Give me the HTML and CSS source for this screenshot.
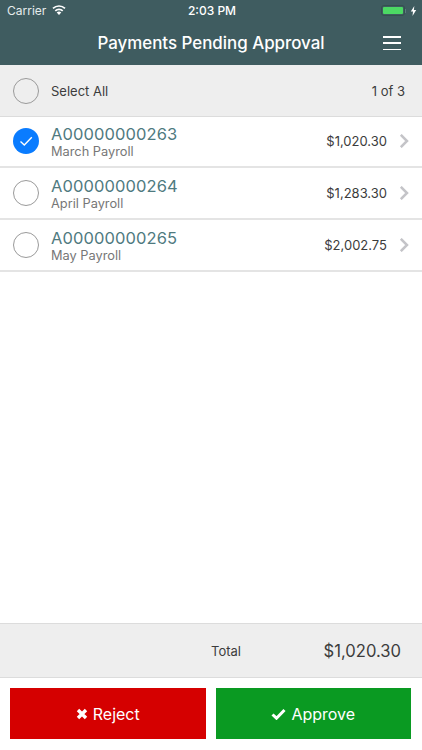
FILE: index.html
```html
<!DOCTYPE html>
<html lang="en">
<head>
<meta charset="utf-8">
<title>Payments Pending Approval</title>
<link rel="stylesheet" href="styles.css">
</head>
<body>
<div class="app">
  <header class="top">
    <div class="status">
      <div class="status-left">
        <span>Carrier</span>
        <svg class="wifi" viewBox="0 0 14 10" width="14" height="10"><path d="M7 10 4.700 7.500a3.300 3.300 0 0 1 4.600 0Z" fill="#fff"/><path d="M3.300 5.900a5.300 5.300 0 0 1 7.400 0" fill="none" stroke="#fff" stroke-width="1.700"/><path d="M1 3.400a8.700 8.700 0 0 1 12 0" fill="none" stroke="#fff" stroke-width="1.700"/></svg>
      </div>
      <div class="status-time">2:03 PM</div>
      <div class="status-right">
        <span class="battery"><span class="battery-fill"></span></span>
        <span class="battery-nub"></span>
        <svg class="bolt" viewBox="0 0 6 10" width="7" height="10"><path d="M3.800 0 0.300 5.600h2.200L2 10l3.700-6H3.400Z" fill="#fff"/></svg>
      </div>
    </div>
    <div class="nav">
      <h1 class="nav-title">Payments Pending Approval</h1>
      <button class="menu" aria-label="Menu"><span></span><span></span><span></span></button>
    </div>
  </header>

  <div class="select-row">
    <span class="radio"></span>
    <span class="select-label">Select All</span>
    <span class="count">1 of 3</span>
  </div>

  <ul class="list">
    <li class="row">
      <span class="radio checked"><svg viewBox="0 0 26 26" width="26" height="26"><path d="M7.500 13.500 11.300 17 18.800 9.200" fill="none" stroke="#fff" stroke-width="1.400"/></svg></span>
      <div class="row-text"><div class="row-id">A00000000263</div><div class="row-name">March Payroll</div></div>
      <span class="amount">$1,020.30</span>
      <svg class="chev" viewBox="0 0 10 14" width="10" height="14"><path d="M1.800 0.800 8 7 1.800 13.200" fill="none" stroke="#c4c4c8" stroke-width="2.500"/></svg>
    </li>
    <li class="row">
      <span class="radio"></span>
      <div class="row-text"><div class="row-id">A00000000264</div><div class="row-name">April Payroll</div></div>
      <span class="amount">$1,283.30</span>
      <svg class="chev" viewBox="0 0 10 14" width="10" height="14"><path d="M1.800 0.800 8 7 1.800 13.200" fill="none" stroke="#c4c4c8" stroke-width="2.500"/></svg>
    </li>
    <li class="row">
      <span class="radio"></span>
      <div class="row-text"><div class="row-id">A00000000265</div><div class="row-name">May Payroll</div></div>
      <span class="amount">$2,002.75</span>
      <svg class="chev" viewBox="0 0 10 14" width="10" height="14"><path d="M1.800 0.800 8 7 1.800 13.200" fill="none" stroke="#c4c4c8" stroke-width="2.500"/></svg>
    </li>
  </ul>

  <div class="total">
    <span class="total-label">Total</span>
    <span class="total-value">$1,020.30</span>
  </div>

  <div class="actions">
    <button class="btn reject"><svg viewBox="0 0 12 12" width="12" height="12"><path d="M2 2 10 10M10 2 2 10" fill="none" stroke="#fff" stroke-width="3.400"/></svg>Reject</button>
    <button class="btn approve"><svg viewBox="0 0 15 12" width="15" height="12"><path d="M1.500 6.500 5.500 10.200 13.500 2" fill="none" stroke="#fff" stroke-width="3"/></svg>Approve</button>
  </div>
</div>
</body>
</html>
```
FILE: styles.css
```css
* { box-sizing: border-box; }
html, body { margin: 0; padding: 0; background: #fff; }
body { font-family: Inter, "Liberation Sans", sans-serif; color: #3a3a3a; }
.app { width: 422px; height: 750px; display: flex; flex-direction: column; overflow: hidden; }

.top { height: 65px; background: #3f5c60; color: #fff; flex: none; }
.status { height: 21px; display: grid; grid-template-columns: 1fr auto 1fr; align-items: center; padding: 0 5px 0 7px; font-size: 12px; }
.status-left { display: flex; align-items: center; gap: 6px; color: #e6ecec; font-size: 12px; }
.wifi { margin-top: -2px; }
.status-time { font-weight: 500; font-size: 12px; }
.status-right { display: flex; justify-content: flex-end; align-items: center; }
.battery { width: 24px; height: 11px; border: 1px solid #35504f; border-radius: 3px; padding: 1px; display: block; }
.battery-fill { display: block; height: 100%; background: #4cd964; border-radius: 1px; }
.battery-nub { width: 1.500px; height: 4px; background: #5c7b7d; margin-right: 4px; }
.nav { height: 44px; position: relative; display: flex; align-items: center; justify-content: center; }
.nav-title { margin: 0; font-size: 16.900px; font-weight: 500; letter-spacing: 0; color: #fff; }
.menu { position: absolute; right: 21px; top: 15px; width: 18px; height: 14px; padding: 0; border: 0; background: none; display: flex; flex-direction: column; justify-content: space-between; }
.menu span { display: block; height: 1.500px; width: 18px; background: #fff; }

.select-row { height: 51px; flex: none; position: relative; background: #eeeeee; box-shadow: 0 1px 0 #dcdcdc; display: flex; align-items: center; padding: 1px 17px 0 13px; }
.select-label { margin-left: 12px; font-size: 13px; color: #3c3c3c; flex: 1; }
.count { font-size: 13px; color: #3c3c3c; }
.radio { width: 26px; height: 26px; border-radius: 50%; border: 1px solid #9a9a9a; flex: none; display: block; }
.radio.checked { background: #0a7cff; border: 0; }
.radio.checked svg { display: block; }

.list { list-style: none; margin: 0; padding: 0; flex: 1; }
.row { height: 52px; border-bottom: 2px solid #e4e4e4; display: flex; align-items: center; padding: 0 13px; }
.row-text { margin-left: 12px; flex: 1; padding-top: 3px; }
.row-id { font-size: 16.500px; line-height: 19px; color: #4f7a7f; letter-spacing: 0.1px; }
.row-name { font-size: 12.800px; line-height: 16px; color: #777; }
.amount { font-size: 13px; color: #3c3c3c; }
.chev { margin-left: 12px; flex: none; }

.total { height: 55px; flex: none; background: #eeeeee; border-top: 1px solid #dcdcdc; border-bottom: 1px solid #dcdcdc; display: flex; align-items: center; padding: 0 21px 0 211px; }
.total-label { font-size: 13px; flex: 1; color: #3c3c3c; }
.total-value { font-size: 16.600px; color: #3c3c3c; }

.actions { height: 72px; flex: none; display: flex; gap: 10px; padding: 10px 11px 11px 10px; }
.btn { flex: 1; height: 51px; border: 0; color: #fff; font-family: inherit; font-size: 16px; display: flex; align-items: center; justify-content: center; gap: 5px; padding: 0; }
.reject { background: #d50000; }
.approve { background: #0a9a22; }
```
